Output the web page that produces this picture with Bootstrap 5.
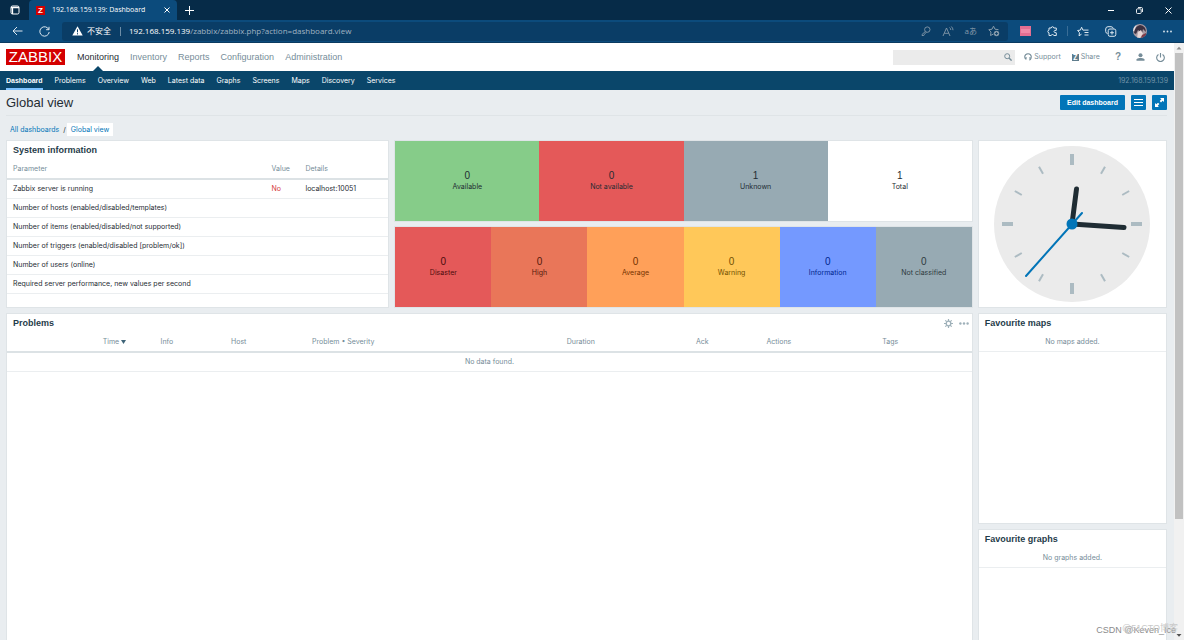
<!DOCTYPE html>
<html lang="en">
<head>
<meta charset="utf-8">
<meta name="viewport" content="width=device-width, initial-scale=1">
<title>192.168.159.139: Dashboard</title>
<link href="https://cdn.jsdelivr.net/npm/bootstrap@5.3.0/dist/css/bootstrap.min.css" rel="stylesheet">
<style>
:root{--ui:"Liberation Sans",Arial,sans-serif;--small:Inter,"Liberation Sans",sans-serif;--chrome:"Open Sans","Noto Sans CJK SC",sans-serif}
body{font:7px/10px var(--small);color:#1f2c33;height:100vh;background:#e9edf0}
button,input{font-family:inherit;font-size:inherit;line-height:inherit}
svg{display:block;flex:none}
a{text-decoration:none}
.plain{border:0;background:none;padding:0;color:inherit}
/* browser window */
.tabs{height:20px;background:#062b48;color:#fff;font-family:var(--chrome);padding-left:10px}
.tab-open{width:148px;background:#0c4b7c;border-radius:4px 4px 0 0;padding:0 7px;gap:7px;margin-left:9px}
.favicon{width:9px;height:9px;background:#d40000;font:bold 8px/9px var(--ui);text-align:center}
.window-buttons{gap:22px}
.toolbar{height:23px;background:#0c4b7c;color:#dce7ef;font-family:var(--chrome);border-bottom:1px solid #0a3a60}
.address{height:19px;background:#0a3d66;border-radius:3px;margin-left:12px;padding:0 8px 0 10px;font-size:8px}
.url-box{color:#a0b3c2}
.url-sep{width:1px;height:9px;background:#6d8da6;margin:0 8px 0 9px}
.muted-icons{color:#8499a9;gap:11px}
.ext{gap:16px;padding:0 12px}
.ext-pair{gap:9px}
.ext-line{width:1px;height:10px;background:#3a6d96}
.ext-pink{width:11px;height:10px;background:#f08aa8;border:2px solid #e46f92;border-width:3px 1px}
.avatar{width:14px;height:14px;border-radius:50%}
/* page header */
.page-top{height:28px;background:#fff;padding:0 9px 0 6px}
.brand-logo{background:#d40000;color:#fff;font:15px/16px var(--ui);width:59px;text-align:center}
.brand-logo:hover{color:#fff}
.main-menu{gap:11px;font:9px/28px var(--ui);margin-left:12px}
.main-menu a{color:#768d99}
.main-menu a.on{color:#1f2c33;position:relative}
.main-menu a.on::after{content:"";position:absolute;left:50%;bottom:0;margin-left:-5px;border:5px solid transparent;border-top:0;border-bottom-color:#0a466a}
.find{width:122px;height:15px;background:#ebebeb;color:#768d99;padding-right:3px}
.find input{background:none;border:0;outline:0;min-width:0}
.tools{color:#768d99;gap:11px;margin-left:9px}
.tools a{color:#768d99;gap:2px}
.share-mark{background:#5f7d8d;color:#fff;width:7px;font-weight:bold;line-height:7px;text-align:center}
.help-mark{font:bold 10px/12px var(--ui)}
.sub-menu{height:19px;background:#0a466a;padding:0 6px;gap:12px;line-height:19px}
.sub-menu a{color:#fff}
.sub-menu a.on{font-family:var(--ui);font-weight:bold;box-shadow:inset 0 -2px #7fc3ff}
.host-name{color:#6f93a8}
/* page body */
.content{padding:0 7px 0 6px}
.title-row{height:26px;border-bottom:1px solid #dfe4e7}
.title-row h1{font:13px/26px var(--ui);margin:0}
.blue{background:#0275b8;color:#fff;border:0;border-radius:1px;height:15px;padding:0;display:flex;align-items:center;justify-content:center}
.blue.sq{width:15px}
.blue.wide{width:65px;font-family:var(--ui);font-weight:bold}
.crumbs{height:24px;padding:7px 0 4px 4px;line-height:13px;gap:4px}
.crumbs a{color:#0275b8}
.crumbs a.on{background:#fff;padding:0 4px;margin-left:-3px}
.board{display:grid;grid-template-columns:383fr 578fr 189fr;grid-template-rows:auto minmax(0,1fr);gap:5px}
.panel{background:#fff;border:1px solid #dfe4e7;min-width:0}
.panel h2{font:bold 9px/19px var(--ui);margin:0;padding-left:6px;color:#1f3c4a}
.to-edge{border-bottom:0}
.problems{grid-column:1/3}
.grid-table{width:100%;table-layout:fixed;border-collapse:collapse}
.grid-table th{font-weight:normal;color:#768d99;height:19px;padding:0 6px;border-bottom:2px solid #dce2e5}
.grid-table td{height:19px;padding:0 6px;border-bottom:1px solid #ebeef0}
.sort{color:inherit;gap:2px}
.none{color:#768d99;text-align:center;line-height:18px;border-bottom:1px solid #ebeef0}
.tile{flex:1 1 0;min-width:0;display:flex;flex-direction:column;align-items:center;justify-content:center}
.tile b{font:10px/12px var(--ui)}
.tiles{height:82px;border:1px solid #dfe4e7;background:#fff}
.mid{gap:4px}
.clock-face{width:156px;height:156px}
.gray-icons{gap:6px;color:#9eb0b9;padding-right:3px}
.side{gap:5px;min-height:0}
.maps{height:211px;flex:none}
.fit{min-height:0;min-width:0}
/* scrollbar */
.bar{width:10px;background:#f1f1f1;padding:0 1px}
.arrow{height:10px;flex:none}
.thumb{height:78%;background:#c1c1c1}
.marks{position:absolute;right:8px;bottom:4px;font:9px/12px var(--ui);color:#8b8b8b;white-space:nowrap}
.marks .under{position:absolute;right:-2px;bottom:2px;color:#c9c9c9;font-family:"Liberation Sans","Noto Sans CJK SC",sans-serif}
</style>
</head>
<body class="d-flex flex-column overflow-hidden">
<div class="tabs d-flex align-items-stretch flex-shrink-0">
  <button class="plain" aria-label="Tab actions"><svg width="10" height="10" viewBox="0 0 10 10" fill="none" stroke="currentColor"><rect x="1" y="1" width="8" height="8" rx="1.5"/><path d="M1 2.500h8M2.500 3v6" stroke-width="1.300"/></svg></button>
  <div class="tab-open d-flex align-items-center"><span class="favicon">Z</span><span>192.168.159.139: Dashboard</span>
  <button class="plain ms-auto" aria-label="Close tab"><svg width="6" height="6" viewBox="0 0 6 6" stroke="currentColor"><path d="M.5.5l5 5M5.500.5l-5 5"/></svg></button></div>
  <button class="plain ms-2" aria-label="New tab"><svg width="9" height="9" viewBox="0 0 9 9" stroke="currentColor"><path d="M4.500 0v9M0 4.500h9"/></svg></button>
  <div class="window-buttons ms-auto d-flex align-items-center pe-2">
    <button class="plain" aria-label="Minimize"><svg width="6" height="7" viewBox="0 0 6 7" stroke="currentColor"><path d="M0 3.500h6"/></svg></button>
    <button class="plain" aria-label="Restore"><svg width="7" height="7" viewBox="0 0 7 7" fill="none" stroke="currentColor" stroke-width=".9"><rect x=".5" y="1.800" width="4.700" height="4.700" rx="1"/><path d="M2 .5h3.300q1.200 0 1.200 1.200V5"/></svg></button>
    <button class="plain me-1" aria-label="Close"><svg width="7" height="7" viewBox="0 0 7 7" stroke="currentColor"><path d="M.5.5l6 6M6.500.5l-6 6"/></svg></button>
  </div>
</div>
<div class="toolbar d-flex align-items-center flex-shrink-0">
  <button class="plain ms-2 ps-1" aria-label="Back"><svg width="11" height="10" viewBox="0 0 11 10" fill="none" stroke="currentColor"><path d="M10.500 5H1M5 1L1 5l4 4"/></svg></button>
  <button class="plain ms-3" aria-label="Reload"><svg width="11" height="11" viewBox="0 0 11 11" fill="none" stroke="currentColor"><path d="M9.800 3.500A4.700 4.700 0 1 0 10.200 6M10 .8v2.900H7.100"/></svg></button>
  <div class="address d-flex align-items-center flex-fill">
    <svg width="11" height="10" viewBox="0 0 11 10"><path d="M5.500.3L10.700 9.500H.3z" fill="#fff"/><path d="M5.500 3.300v3M5.500 7.200v1.200" stroke="#0a3d66"/></svg>
    <span class="text-white ms-1">不安全</span><span class="url-sep"></span>
    <a href="#" class="url-box"><span class="text-white">192.168.159.139</span>/zabbix/zabbix.php?action=dashboard.view</a>
    <div class="muted-icons d-flex align-items-center ms-auto">
      <svg width="10" height="10" viewBox="0 0 10 10" fill="none" stroke="currentColor" stroke-width=".9"><circle cx="6.300" cy="3.600" r="2.700"/><path d="M4.300 5.500L1 8.500V9.500H2.800L3.500 8.200 5.300 6.200"/></svg>
      <svg width="12" height="11" viewBox="0 0 12 11" fill="none" stroke="currentColor" stroke-width=".9"><path d="M1 10L4.500 2 8 10M2.300 7.300h4.400M7.500 1.500q1.300 1 1.300 2.500M9.300.5Q11 2 11 4.200"/></svg>
      <span>aあ</span>
      <svg width="12" height="12" viewBox="0 0 12 12" fill="none" stroke="currentColor"><path d="M5.500 9L2.500 10.500 3 7 .8 4.700l3.200-.5L5.500 1.200 7 4.200l3.500.5"/><circle cx="8.500" cy="8.500" r="2.700" fill="currentColor" stroke="none"/><path d="M8.500 7v3M7 8.500h3" stroke="#0a3d66" stroke-width=".8"/></svg>
    </div>
  </div>
  <div class="ext d-flex align-items-center">
    <span class="ext-pink"></span>
    <div class="ext-pair d-flex align-items-center">
    <svg width="11" height="11" viewBox="0 0 11 11" fill="none" stroke="currentColor"><path d="M2 2h2.200q.1-1.300 1.300-1.300T6.800 2H9.300v2.300Q7 4.200 7 5.500t2.300 1.300V9.500H6.800q-.1-1-1.300-1T4.200 9.500H2V6.800Q.8 6.700.8 5.500T2 4.200z"/></svg>
    <span class="ext-line"></span>
    <svg width="12" height="11" viewBox="0 0 12 11" fill="none" stroke="currentColor"><path d="M4.500 8.200L2 9.800l.5-3.100L.6 4.500l2.800-.4L4.600 1.200 5.900 4.100H11.500M7.500 6.500h4M7.500 9h4"/></svg>
    </div>
    <svg width="12" height="11" viewBox="0 0 12 11" fill="none" stroke="currentColor"><path d="M2.500 7.500Q.8 7.300.7 5.500V3Q.8.8 3 .7h3Q7.800.8 8.300 2.500"/><rect x="3.200" y="3" width="7.600" height="7.300" rx="1.700"/><path d="M7 4.800v3.800M5.100 6.700h3.800"/></svg>
    <svg class="avatar" viewBox="0 0 14 14"><rect width="14" height="14" fill="#a99aa2"/><path d="M1 9Q2 2 7 1q6 1 6 7l-3-3-1 4-4-3-2 4z" fill="#3b3040"/><path d="M5 8l3-2 2 4-3 4H4z" fill="#e8d6d6"/><path d="M0 0h4L1 7H0z" fill="#e9e4ea"/><path d="M9 11l4-2v5H8z" fill="#813c49"/></svg>
    <svg width="9" height="3" viewBox="0 0 9 3" fill="currentColor"><circle cx="1" cy="1.500" r=".9"/><circle cx="4.500" cy="1.500" r=".9"/><circle cx="8" cy="1.500" r=".9"/></svg>
  </div>
</div>
<div class="d-flex flex-fill fit">
<main class="flex-fill d-flex flex-column fit">
  <header class="page-top d-flex align-items-center flex-shrink-0">
    <a href="#" class="brand-logo">ZABBIX</a>
    <nav class="main-menu d-flex"><a href="#" class="on">Monitoring</a><a href="#">Inventory</a><a href="#">Reports</a><a href="#">Configuration</a><a href="#">Administration</a></nav>
    <div class="find d-flex align-items-center ms-auto"><input type="search" class="flex-fill" aria-label="Search"><svg width="8" height="8" viewBox="0 0 8 8" fill="none" stroke="currentColor"><circle cx="3.200" cy="3.200" r="2.500"/><path d="M5 5l2.600 2.600" stroke-width="1.400"/></svg></div>
    <div class="tools d-flex align-items-center">
      <a href="#" class="d-flex align-items-center"><svg width="8" height="8" viewBox="0 0 8 8" fill="none" stroke="currentColor" stroke-width="1.100"><path d="M2 6Q.6 5.500.7 3.800 1 .8 4 .7t3.300 3.100Q7.400 6 5.500 7.200"/><path d="M2 4v2.500M6 4v2.500"/></svg>Support</a>
      <a href="#" class="d-flex align-items-center"><span class="share-mark">Z</span>Share</a>
      <a href="#" class="help-mark ms-1" aria-label="Help">?</a>
      <a href="#" aria-label="Profile" class="ms-1"><svg width="9" height="8" viewBox="0 0 9 8" fill="currentColor"><circle cx="4.500" cy="2.200" r="2"/><path d="M.5 7.800V6.500Q1 5.300 3.500 5h2Q8 5.300 8.500 6.500v1.300z"/></svg></a>
      <a href="#" aria-label="Sign out"><svg width="9" height="9" viewBox="0 0 8 8" fill="none" stroke="currentColor"><path d="M2.200 1.300a3.400 3.400 0 1 0 3.600 0M4 0v4"/></svg></a>
    </div>
  </header>
  <nav class="sub-menu d-flex flex-shrink-0"><a href="#" class="on">Dashboard</a><a href="#">Problems</a><a href="#">Overview</a><a href="#">Web</a><a href="#">Latest data</a><a href="#">Graphs</a><a href="#">Screens</a><a href="#">Maps</a><a href="#">Discovery</a><a href="#">Services</a><span class="host-name ms-auto">192.168.159.139</span></nav>
  <div class="content flex-fill d-flex flex-column fit">
    <div class="title-row d-flex align-items-center flex-shrink-0"><h1>Global view</h1>
      <div class="ms-auto d-flex" style="gap:6px"><button class="blue wide">Edit dashboard</button>
      <button class="blue sq" aria-label="Actions"><svg width="9" height="9" viewBox="0 0 9 9" stroke="currentColor"><path d="M0 1.500h9M0 4.500h9M0 7.500h9"/></svg></button>
      <button class="blue sq" aria-label="Fullscreen"><svg width="9" height="9" viewBox="0 0 9 9" fill="currentColor"><path d="M5 0h4v4L7.700 2.700 6 4.400 4.700 3 6.400 1.300zM4 9H0V5l1.300 1.300L3 4.700 4.400 6 2.700 7.700z"/></svg></button></div>
    </div>
    <nav class="crumbs d-flex flex-shrink-0" aria-label="Breadcrumb"><a href="#">All dashboards</a><span>/</span><a href="#" class="on">Global view</a></nav>
    <div class="board flex-fill fit">
      <section class="panel"><h2>System information</h2>
        <table class="grid-table"><colgroup><col style="width:67.8%"><col style="width:8.900%"><col></colgroup>
        <thead><tr><th>Parameter</th><th>Value</th><th>Details</th></tr></thead>
        <tbody><tr><td>Zabbix server is running</td><td style="color:#d64040">No</td><td>localhost:10051</td></tr>
        <tr><td>Number of hosts (enabled/disabled/templates)</td><td></td><td></td></tr>
        <tr><td>Number of items (enabled/disabled/not supported)</td><td></td><td></td></tr>
        <tr><td>Number of triggers (enabled/disabled [problem/ok])</td><td></td><td></td></tr>
        <tr><td>Number of users (online)</td><td></td><td></td></tr>
        <tr><td>Required server performance, new values per second</td><td></td><td></td></tr></tbody></table>
      </section>
      <div class="mid d-flex flex-column">
        <section class="tiles d-flex"><div class="tile" style="background:#86cc89"><b>0</b>Available</div><div class="tile" style="background:#e45959"><b>0</b>Not available</div><div class="tile" style="background:#97aab3"><b>1</b>Unknown</div><div class="tile"><b>1</b>Total</div></section>
        <section class="tiles d-flex"><div class="tile" style="background:#e45959;color:#4b0c0c"><b>0</b>Disaster</div><div class="tile" style="background:#e97659;color:#52190b"><b>0</b>High</div><div class="tile" style="background:#ffa059;color:#733100"><b>0</b>Average</div><div class="tile" style="background:#ffc859;color:#735000"><b>0</b>Warning</div><div class="tile" style="background:#7499ff;color:#00268e"><b>0</b>Information</div><div class="tile" style="background:#97aab3;color:#2e3a40"><b>0</b>Not classified</div></section>
      </div>
      <section class="panel d-flex align-items-center justify-content-center">
        <svg class="clock-face" viewBox="0 0 156 156"><circle cx="78" cy="78" r="78" fill="#ebebeb"/>
          <g stroke="#acbbc2" stroke-width="4"><path d="M78 8v11M78 137v11M8 78h11M137 78h11"/></g>
          <path id="t" stroke="#acbbc2" stroke-width="2" d="M78 12v8" transform="rotate(30 78 78)"/>
          <use href="#t" transform="rotate(30 78 78)"/><use href="#t" transform="rotate(90 78 78)"/><use href="#t" transform="rotate(120 78 78)"/><use href="#t" transform="rotate(180 78 78)"/><use href="#t" transform="rotate(210 78 78)"/><use href="#t" transform="rotate(270 78 78)"/><use href="#t" transform="rotate(300 78 78)"/>
          <g stroke="#1f2c33" stroke-width="5" stroke-linecap="round"><path d="M78 78L82.500 43M78 78L130 81.500"/></g>
          <path d="M88 67L32 130" stroke="#0275b8" stroke-width="2" stroke-linecap="round"/><circle cx="78" cy="78" r="5.500" fill="#0275b8"/></svg>
      </section>
      <section class="panel problems to-edge">
        <div class="d-flex"><h2>Problems</h2><div class="gray-icons d-flex align-items-center ms-auto">
          <button class="plain" aria-label="Settings"><svg width="9" height="9" viewBox="0 0 9 9" fill="none" stroke="currentColor"><circle cx="4.500" cy="4.500" r="2.300" stroke-width="1.300"/><path d="M4.500 0v2M4.500 7v2M0 4.500h2M7 4.500h2M1.300 1.300l1.400 1.400M6.300 6.300l1.400 1.400M7.700 1.300L6.300 2.700M2.700 6.300L1.300 7.700" stroke-width="1.200"/></svg></button>
          <button class="plain" aria-label="More"><svg width="10" height="3" viewBox="0 0 10 3" fill="currentColor"><circle cx="1.400" cy="1.500" r="1.200"/><circle cx="5" cy="1.500" r="1.200"/><circle cx="8.600" cy="1.500" r="1.200"/></svg></button></div></div>
        <table class="grid-table"><colgroup><col style="width:9.300%"><col style="width:6%"><col style="width:7.300%"><col style="width:8.400%"><col style="width:26.400%"><col style="width:13.400%"><col style="width:7.300%"><col style="width:12%"><col></colgroup>
        <thead><tr><th></th><th><a href="#" class="sort d-flex align-items-center">Time <svg width="5" height="4" viewBox="0 0 5 4" fill="#3f6478"><path d="M0 0h5L2.500 4z"/></svg></a></th><th>Info</th><th>Host</th><th>Problem • Severity</th><th>Duration</th><th>Ack</th><th>Actions</th><th>Tags</th></tr></thead>
        <tbody><tr><td colspan="9" class="none">No data found.</td></tr></tbody></table>
      </section>
      <div class="side d-flex flex-column">
        <section class="panel maps"><h2>Favourite maps</h2><div class="none">No maps added.</div></section>
        <section class="panel flex-fill to-edge"><h2>Favourite graphs</h2><div class="none">No graphs added.</div></section>
      </div>
    </div>
  </div>
</main>
<div class="bar d-flex flex-column"><svg class="arrow" width="8" height="10" viewBox="0 0 8 10"><path d="M1.500 6.500h5L4 3.800z" fill="#8b8b8b"/></svg><div class="thumb"></div><svg class="arrow mt-auto" width="8" height="10" viewBox="0 0 8 10"><path d="M1.500 4h5L4 6.700z" fill="#505050"/></svg></div>
</div>
<div class="marks"><span class="under">@51CTO博客</span>CSDN @Keven_Ice</div>
</body>
</html>
